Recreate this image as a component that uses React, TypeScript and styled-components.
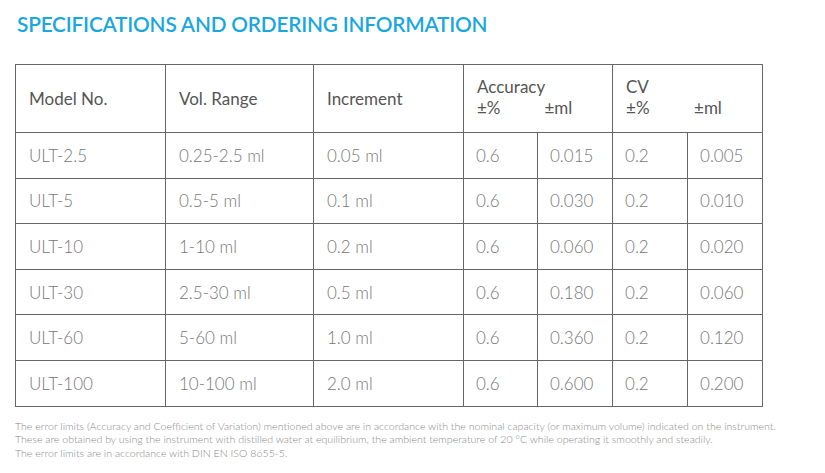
import React from 'react';
import styled, { createGlobalStyle } from 'styled-components';

const GlobalStyle = createGlobalStyle`
  html, body {
    margin: 0;
    padding: 0;
    background: #fff;
  }
  body {
    font-family: 'Lato', 'Open Sans', sans-serif;
  }
`;

const Page = styled.div`
  width: 825px;
  height: 473px;
  padding: 10px 0 0 15px;
  box-sizing: border-box;
  overflow: hidden;
`;

const Title = styled.h1`
  margin: 0 0 0 2px;
  font-size: 20.8px;
  font-weight: 600;
  line-height: 28px;
  color: #1aa7e0;
  letter-spacing: -0.2px;
`;

const Table = styled.table`
  margin-top: 26px;
  width: 747px;
  border-collapse: collapse;
  table-layout: fixed;
  border: 1.5px solid #666;
`;

const HeadCell = styled.th`
  height: 67px;
  padding: 0 13px;
  text-align: left;
  vertical-align: middle;
  font-size: 17px;
  font-weight: 400;
  color: #555;
  border: 1.5px solid #666;
`;

const GroupLabel = styled.div`
  line-height: 21px;
  margin-top: -3px;
`;

const SubLabels = styled.div`
  display: grid;
  grid-template-columns: 1fr 1fr;
  line-height: 21px;
  margin-right: -13px;
`;

const Cell = styled.td<{ $wide?: boolean }>`
  height: 44.6px;
  padding: 0 ${p => (p.$wide ? 13 : 12)}px;
  font-size: 17px;
  font-weight: 300;
  color: #777;
  border: 1.5px solid #666;
  white-space: nowrap;
`;

const Notes = styled.div`
  margin-top: 13px;
  font-size: 10.6px;
  font-weight: 300;
  line-height: 13.6px;
  color: #8a8a8a;
  white-space: nowrap;
`;

const rows = [
  ['ULT-2.5', '0.25-2.5 ml', '0.05 ml', '0.6', '0.015', '0.2', '0.005'],
  ['ULT-5', '0.5-5 ml', '0.1 ml', '0.6', '0.030', '0.2', '0.010'],
  ['ULT-10', '1-10 ml', '0.2 ml', '0.6', '0.060', '0.2', '0.020'],
  ['ULT-30', '2.5-30 ml', '0.5 ml', '0.6', '0.180', '0.2', '0.060'],
  ['ULT-60', '5-60 ml', '1.0 ml', '0.6', '0.360', '0.2', '0.120'],
  ['ULT-100', '10-100 ml', '2.0 ml', '0.6', '0.600', '0.2', '0.200'],
];

export default function App() {
  return (
    <Page>
      <GlobalStyle />
      <Title>SPECIFICATIONS AND ORDERING INFORMATION</Title>
      <Table>
        <colgroup>
          <col style={{ width: 150 }} />
          <col style={{ width: 148 }} />
          <col style={{ width: 150 }} />
          <col style={{ width: 74 }} />
          <col style={{ width: 75 }} />
          <col style={{ width: 75 }} />
          <col style={{ width: 75 }} />
        </colgroup>
        <thead>
          <tr>
            <HeadCell>Model No.</HeadCell>
            <HeadCell>Vol. Range</HeadCell>
            <HeadCell>Increment</HeadCell>
            <HeadCell colSpan={2}>
              <GroupLabel>Accuracy</GroupLabel>
              <SubLabels>
                <span>±%</span>
                <span>±ml</span>
              </SubLabels>
            </HeadCell>
            <HeadCell colSpan={2}>
              <GroupLabel>CV</GroupLabel>
              <SubLabels>
                <span>±%</span>
                <span>±ml</span>
              </SubLabels>
            </HeadCell>
          </tr>
        </thead>
        <tbody>
          {rows.map(r => (
            <tr key={r[0]}>
              {r.map((v, i) => (
                <Cell key={i} $wide={i < 3}>
                  {v}
                </Cell>
              ))}
            </tr>
          ))}
        </tbody>
      </Table>
      <Notes>
        The error limits (Accuracy and Coefficient of Variation) mentioned above are in accordance with the nominal capacity (or maximum volume) indicated on the instrument.
        <br />
        These are obtained by using the instrument with distilled water at equilibrium, the ambient temperature of 20 °C while operating it smoothly and steadily.
        <br />
        The error limits are in accordance with DIN EN ISO 8655-5.
      </Notes>
    </Page>
  );
}
